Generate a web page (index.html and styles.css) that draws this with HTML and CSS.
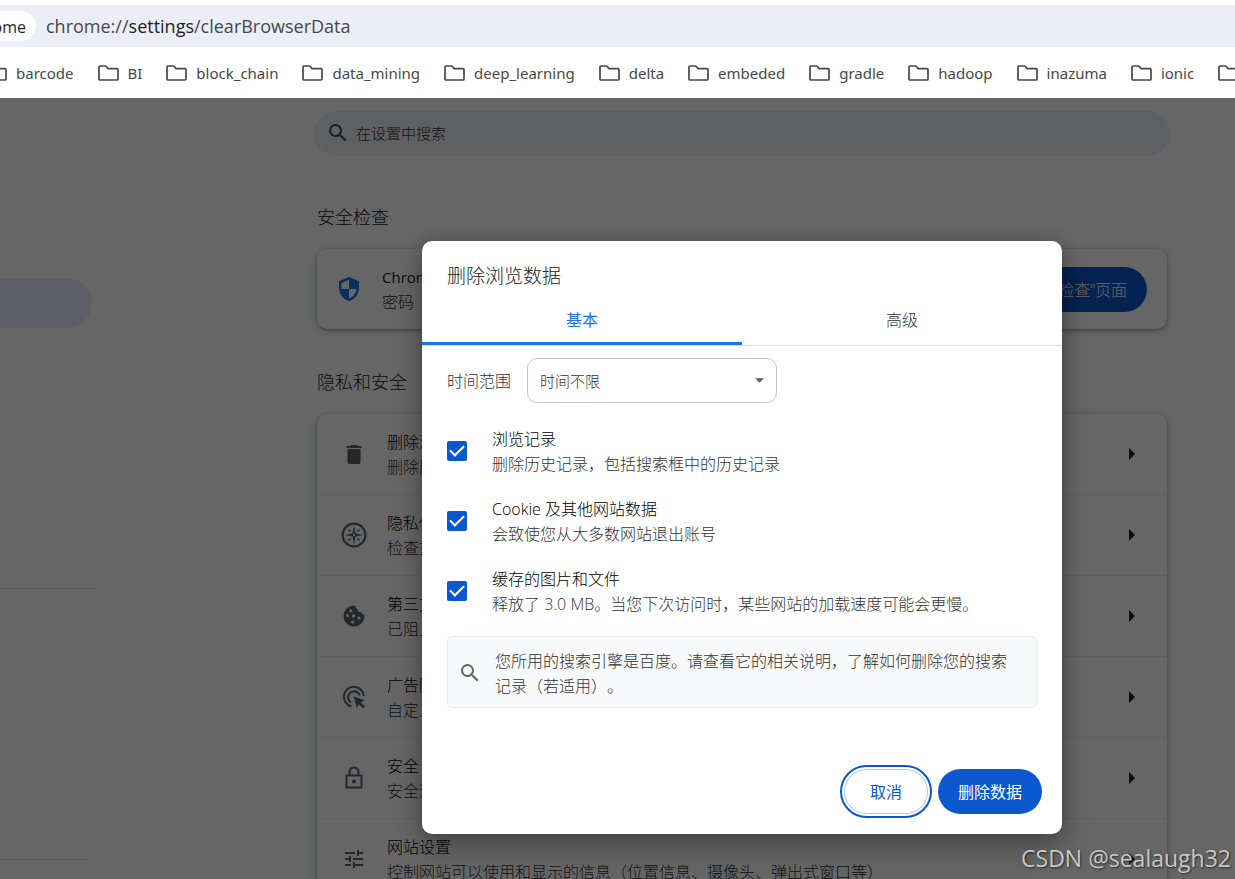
FILE: index.html
```html
<!DOCTYPE html>
<html lang="zh-CN">
<head>
<meta charset="utf-8">
<title>设置 - 删除浏览数据</title>
<link rel="stylesheet" href="styles.css">
</head>
<body>
<svg class="defs" aria-hidden="true">
  <symbol id="folder" viewBox="0 0 21 16"><path d="M2 1h5.6l2.6 2.6H19a1 1 0 0 1 1 1V14a1 1 0 0 1-1 1H2a1 1 0 0 1-1-1V2a1 1 0 0 1 1-1z" fill="none" stroke="#474747" stroke-width="1.7"/></symbol>
  <symbol id="search" viewBox="0 0 24 24"><path d="M15.5 14h-.79l-.28-.27A6.47 6.47 0 0 0 16 9.5 6.5 6.5 0 1 0 9.5 16c1.61 0 3.09-.59 4.23-1.57l.27.28v.79l5 4.99L20.49 19l-4.99-5zm-6 0C7.01 14 5 11.99 5 9.5S7.01 5 9.5 5 14 7.01 14 9.5 11.99 14 9.5 14z"/></symbol>
  <symbol id="arrow" viewBox="0 0 6 12"><path d="M0 0l6 6-6 6z"/></symbol>
</svg>

<header class="browser">
  <div class="omnibox">
    <span class="chip">Chrome</span>
    <span class="url">chrome://<b>settings</b>/clearBrowserData</span>
  </div>
  <nav class="bookmarks">
    <a href="#"><svg><use href="#folder"/></svg>barcode</a>
    <a href="#"><svg><use href="#folder"/></svg>BI</a>
    <a href="#"><svg><use href="#folder"/></svg>block_chain</a>
    <a href="#"><svg><use href="#folder"/></svg>data_mining</a>
    <a href="#"><svg><use href="#folder"/></svg>deep_learning</a>
    <a href="#"><svg><use href="#folder"/></svg>delta</a>
    <a href="#"><svg><use href="#folder"/></svg>embeded</a>
    <a href="#"><svg><use href="#folder"/></svg>gradle</a>
    <a href="#"><svg><use href="#folder"/></svg>hadoop</a>
    <a href="#"><svg><use href="#folder"/></svg>inazuma</a>
    <a href="#"><svg><use href="#folder"/></svg>ionic</a>
    <a href="#" aria-label="folder"><svg><use href="#folder"/></svg></a>
  </nav>
</header>

<div class="page">
  <aside class="sidebar">
    <div class="sidebar-active"></div>
    <hr class="rule rule-first">
    <hr class="rule rule-second">
  </aside>
  <main class="content">
    <label class="search"><svg><use href="#search"/></svg><input type="text" placeholder="在设置中搜索" aria-label="在设置中搜索"></label>

    <h2>安全检查</h2>
    <section class="card check">
      <svg class="shield" viewBox="0 0 20 24"><path d="M10 0L0 4.200v6.500C0 17 4.200 22.500 10 24c5.800-1.500 10-7 10-13.300V4.200z" fill="#1a73e8"/><path d="M10 2.700V12h7.600c-.6 4.300-3.500 8.100-7.600 9.400V12H2.400V5.900z" fill="#fff"/></svg>
      <div class="lines"><strong>Chrome</strong><span>密码</span></div>
      <button class="primary check-button" type="button">前往“安全检查”页面</button>
    </section>

    <h2>隐私和安全</h2>
    <section class="card list">
      <div class="row">
        <svg viewBox="0 0 24 24"><path d="M5.500 20c0 1.100.9 2 2 2h9c1.100 0 2-.9 2-2V7h-13zM19.500 4h-4l-1-1h-5l-1 1h-4v2h15z"/></svg>
        <div class="lines"><span class="name">删除浏览数据</span><span>删除历史记录</span></div>
        <svg class="arrow"><use href="#arrow"/></svg>
      </div>
      <div class="row">
        <svg class="wide" viewBox="0 0 26 26"><circle cx="13" cy="13" r="11.400" fill="none" stroke="#5f6368" stroke-width="2.200"/><path d="M13 3.500l1.500 8L22.500 13l-8 1.500-1.500 8-1.500-8-8-1.500 8-1.500z"/><path d="M7.500 7.500l2 2M18.500 7.500l-2 2M7.500 18.500l2-2M18.500 18.500l-2-2" stroke="#5f6368" stroke-width="1.300"/><circle cx="13" cy="13" r="1.200" fill="#fff"/></svg>
        <div class="lines"><span class="name">隐私保护指南</span><span>检查重要的设置</span></div>
        <svg class="arrow"><use href="#arrow"/></svg>
      </div>
      <div class="row">
        <svg viewBox="0 0 24 24"><path d="M12 1.500A10.500 10.500 0 1 0 22.500 12c0-.7-.1-1.100-.2-1.600-1.700.4-3-.5-3.100-2.300-2.500.2-4-1-3.700-3.200-1.600-.4-2.300-1.600-2-3.300z"/><g fill="#fff"><circle cx="8.800" cy="6.800" r="1.600"/><circle cx="5.500" cy="11.500" r="1.500"/><circle cx="11.500" cy="12" r="1.700"/><circle cx="17" cy="14" r="1.600"/><circle cx="10.500" cy="18" r="1.600"/></g></svg>
        <div class="lines"><span class="name">第三方 Cookie</span><span>已阻止第三方 Cookie</span></div>
        <svg class="arrow"><use href="#arrow"/></svg>
      </div>
      <div class="row">
        <svg viewBox="0 0 24 24"><g fill="none" stroke="#5f6368" stroke-width="2"><path d="M9.500 21.500A10 10 0 1 1 21.800 11"/><path d="M9 17.500A6 6 0 1 1 17.700 10.300"/></g><path d="M11.500 11.500l11.500 3.800-4.300 2 4.300 4.300-1.900 1.900-4.300-4.300-1.700 4z"/></svg>
        <div class="lines"><span class="name">广告隐私权设置</span><span>自定义广告设置</span></div>
        <svg class="arrow"><use href="#arrow"/></svg>
      </div>
      <div class="row">
        <svg viewBox="0 0 24 24"><path d="M4.500 9.500h15v12h-15zM7.500 9.500V6a4.500 4.500 0 0 1 9 0v3.500" fill="none" stroke="#5f6368" stroke-width="2" stroke-linejoin="round"/><circle cx="12" cy="15.500" r="2.100"/></svg>
        <div class="lines"><span class="name">安全</span><span>安全浏览</span></div>
        <svg class="arrow"><use href="#arrow"/></svg>
      </div>
      <div class="row">
        <svg viewBox="0 0 24 24"><path d="M3 17v2h6v-2zM3 5v2h10V5zM13 21v-2h8v-2h-8v-2h-2v6zM7 9v2H3v2h4v2h2V9zM21 13v-2H11v2zM15 9h2V7h4V5h-4V3h-2z"/></svg>
        <div class="lines"><span class="name">网站设置</span><span>控制网站可以使用和显示的信息（位置信息、摄像头、弹出式窗口等）</span></div>
        <svg class="arrow"><use href="#arrow"/></svg>
      </div>
    </section>
  </main>

  <div class="scrim">
    <div class="dialog" role="dialog" aria-labelledby="dialog-title">
      <h1 id="dialog-title">删除浏览数据</h1>
      <div class="tabs" role="tablist">
        <button class="tab selected" type="button" role="tab" aria-selected="true">基本</button>
        <button class="tab" type="button" role="tab" aria-selected="false">高级</button>
      </div>
      <div class="range">
        <label for="range">时间范围</label>
        <div class="select">
          <select id="range"><option>时间不限</option></select>
          <svg viewBox="0 0 10 5"><path d="M0 0h10L5 5z"/></svg>
        </div>
      </div>
      <div class="options">
        <label class="option"><input type="checkbox" checked><span class="lines"><span class="name">浏览记录</span><span>删除历史记录，包括搜索框中的历史记录</span></span></label>
        <label class="option"><input type="checkbox" checked><span class="lines"><span class="name">Cookie 及其他网站数据</span><span>会致使您从大多数网站退出账号</span></span></label>
        <label class="option"><input type="checkbox" checked><span class="lines"><span class="name">缓存的图片和文件</span><span>释放了 3.0 MB。当您下次访问时，某些网站的加载速度可能会更慢。</span></span></label>
      </div>
      <div class="note">
        <svg><use href="#search"/></svg>
        <p>您所用的搜索引擎是百度。请查看它的相关说明，了解如何删除您的搜索记录（若适用）。</p>
      </div>
      <div class="actions">
        <button class="cancel" type="button">取消</button>
        <button class="primary" type="button">删除数据</button>
      </div>
    </div>
  </div>
  <div class="watermark">CSDN @sealaugh32</div>
</div>
</body>
</html>
```
FILE: styles.css
```css
* { box-sizing: border-box; }
body {
  margin: 0;
  height: 100vh;
  display: flex;
  flex-direction: column;
  overflow: hidden;
  background: #fff;
  color: #303336;
  font: 16px/25px "Open Sans", "Noto Sans CJK SC", sans-serif;
  font-weight: 300;
  text-spacing-trim: space-all;
}
button, input, select { font: inherit; }
h1, h2, p { margin: 0; font-weight: 300; }
svg { flex: none; fill: #5f6368; }
.defs { position: absolute; width: 0; height: 0; }

/* Browser bars */
.omnibox {
  display: flex;
  align-items: center;
  gap: 10px;
  height: 42px;
  margin-top: 5px;
  background: #ebeef7;
  white-space: nowrap;
}
.chip {
  display: flex;
  justify-content: flex-end;
  align-items: center;
  width: 36px;
  height: 30px;
  padding: 2px 10px 0 0;
  overflow: hidden;
  border-radius: 0 15px 15px 0;
  background: #fff;
  color: #1f1f1f;
  font-weight: 400;
}
.url { font-size: 18px; color: #474747; font-weight: 400; }
.url b { font-weight: 400; color: #1f1f1f; }
.bookmarks {
  display: flex;
  align-items: center;
  gap: 24px;
  height: 51px;
  padding-top: 1px;
  margin-left: -14px;
  overflow: hidden;
  white-space: nowrap;
}
.bookmarks a {
  display: flex;
  align-items: center;
  gap: 9px;
  color: #474747;
  font-family: "Noto Sans", sans-serif;
  font-size: 15px;
  font-weight: 400;
  text-decoration: none;
}
.bookmarks svg { width: 21px; height: 16px; }

/* Settings page */
.page { position: relative; flex: 1; display: flex; min-height: 0; overflow: hidden; }
.sidebar { flex: none; width: 96px; margin-right: 218px; padding-top: 180px; }
.sidebar-active { width: 92px; height: 50px; border-radius: 0 25px 25px 0; background: #e6edfd; }
.rule { margin: 0; border: 0; border-top: 1px solid #e0e0e0; }
.rule-first { margin-top: 260px; }
.rule-second { margin-top: 270px; margin-right: 8px; }
.content { flex: 1; min-width: 0; padding: 13px 65px 0 0; }
.search {
  display: flex;
  align-items: center;
  gap: 6px;
  height: 45px;
  padding: 0 0 2px 12px;
  border-radius: 23px;
  background: #ebf0f9;
}
.search svg { width: 24px; height: 24px; fill: #474747; }
.search input { flex: 1; border: 0; background: none; padding: 0; font-size: 15px; line-height: 20px; }
.search input::placeholder { color: #303336; }
.content h2 { margin-left: 3px; font-size: 18px; line-height: 24px; color: #202124; }
.search + h2 { margin-top: 49px; }
.card + h2 { margin-top: 41px; }
.card {
  margin: 20px 3px 0;
  border-radius: 10px;
  background: #fff;
  box-shadow: 0 1px 3px rgba(60, 64, 67, .4), 0 2px 8px rgba(60, 64, 67, .25);
}
.lines { display: flex; flex-direction: column; padding-top: 2px; white-space: nowrap; }
.lines strong { color: #202124; font-size: 15px; font-weight: 500; }
.name { color: #000; }
.check { display: flex; align-items: center; height: 80px; padding: 0 20px 0 22px; }
.shield { width: 20px; height: 24px; margin-right: 23px; }
.check-button { margin-left: auto; }
.row { display: flex; align-items: center; height: 81px; padding: 0 32px 0 25px; border-top: 1px solid #eee; }
.row:first-child { border-top: 0; height: 80px; }
.row svg { width: 24px; height: 24px; margin-right: 21px; }
.row .wide { width: 26px; height: 26px; margin: 0 20px 0 -1px; }
.row .arrow { width: 6px; height: 12px; margin: 0 0 0 auto; fill: #202124; }

.primary, .cancel { height: 45px; padding: 2px 20px 0; border: 0; border-radius: 23px; white-space: nowrap; }
.primary { background: #0b57d0; color: #fff; }

/* Dialog */
.scrim {
  position: absolute;
  inset: 0;
  display: flex;
  justify-content: center;
  align-items: flex-start;
  padding: 143px 0 0 249px;
  background: rgba(0, 0, 0, .6);
}
.dialog {
  width: 640px;
  padding-bottom: 20px;
  border-radius: 10px;
  background: #fff;
  box-shadow: 0 0 16px rgba(0, 0, 0, .2), 0 15px 30px rgba(0, 0, 0, .25);
}
.dialog h1 { padding: 20px 25px 0; font-size: 19px; line-height: 30px; color: #202124; }
.tabs { display: flex; margin-top: 5px; border-bottom: 1px solid #dadce0; }
.tab {
  flex: 1;
  height: 49px;
  padding: 2px 0 0;
  border: 0;
  border-bottom: 3px solid transparent;
  background: none;
  color: #303336;
}
.tab.selected { color: #1a73e8; border-color: #1a73e8; font-weight: 400; }
.range { display: flex; align-items: center; gap: 16px; padding: 12px 25px 0; }
.range label { padding-top: 2px; }
.select { position: relative; width: 250px; }
.select select {
  appearance: none;
  display: block;
  width: 100%;
  height: 45px;
  padding: 2px 12px 0;
  border: 1px solid #c7c7c7;
  border-radius: 10px;
  background: #fff;
  color: #303336;
  font-size: 15px;
}
.select svg { position: absolute; right: 13px; top: 20px; width: 9px; height: 5px; }
.options { display: flex; flex-direction: column; gap: 18px; padding: 22px 25px 0; }
.option { display: flex; align-items: center; gap: 25px; }
.option input {
  appearance: none;
  display: grid;
  place-items: center;
  flex: none;
  width: 20px;
  height: 20px;
  margin: 0;
  border-radius: 2px;
  background: #0b57d0;
}
.option input::before {
  content: "";
  width: 6px;
  height: 12px;
  margin-bottom: 4px;
  border: solid #fff;
  border-width: 0 2px 2px 0;
  transform: rotate(45deg);
}
.note {
  display: flex;
  align-items: center;
  gap: 13px;
  margin: 19px 25px 0;
  padding: 10px 18px 8px 10px;
  border: 1px solid #e8eaed;
  border-radius: 5px;
  background: #f8f9fa;
}
.note p { padding-top: 2px; }
.note svg { width: 24px; height: 24px; }
.actions { display: flex; justify-content: flex-end; gap: 10px; margin-top: 61px; padding: 0 20px; }
.cancel {
  padding: 2px 25px 0;
  border: 1px solid #a8c7fa;
  outline: 2px solid #0b57d0;
  outline-offset: 2px;
  background: #fff;
  color: #0b57d0;
}
.actions .primary, .actions .cancel { font-weight: 400; }
.watermark {
  position: absolute;
  right: 4px;
  bottom: 5px;
  color: #c8c8c8;
  font: 23px/32px "Open Sans", sans-serif;
  text-shadow: 1px 1px 2px rgba(0, 0, 0, .6);
}
```
